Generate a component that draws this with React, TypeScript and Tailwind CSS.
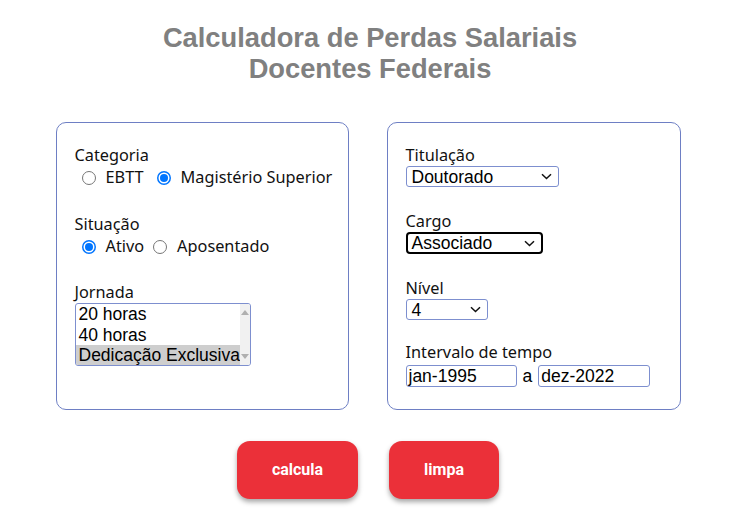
import React from 'react';

const labelFont = { fontFamily: '"Noto Sans", "Open Sans", sans-serif' };
const arial = { fontFamily: '"Liberation Sans", Arial, sans-serif' };

function Radio({ checked }: { checked?: boolean }) {
  return (
    <svg width="14" height="14" viewBox="0 0 14 14" className="shrink-0">
      {checked ? (
        <>
          <circle cx="7" cy="7" r="6.25" fill="white" stroke="#0075ff" strokeWidth="1.5" />
          <circle cx="7" cy="7" r="4" fill="#0075ff" />
        </>
      ) : (
        <circle cx="7" cy="7" r="6.5" fill="white" stroke="#767676" strokeWidth="1" />
      )}
    </svg>
  );
}

function Chevron() {
  return (
    <svg width="11" height="7" viewBox="0 0 11 7" className="shrink-0">
      <path d="M1 1.2 L5.5 5.5 L10 1.2" fill="none" stroke="#111" strokeWidth="1.5" />
    </svg>
  );
}

function FakeSelect({
  value,
  width,
  focused,
}: {
  value: string;
  width: string;
  focused?: boolean;
}) {
  return (
    <div
      className={`flex items-center justify-between bg-white pr-[6px] ${width} ${
        focused
          ? 'border-2 border-black rounded-[4px] h-[22px] pl-[4px]'
          : 'border border-[#7d8fcf] rounded-[3px] h-[21px] pl-[5px]'
      }`}
    >
      <span className="text-[17.5px] leading-[20px] text-black" style={arial}>
        {value}
      </span>
      <Chevron />
    </div>
  );
}

function Label({ children }: { children: React.ReactNode }) {
  return (
    <div className="text-[16.3px] leading-[22px] text-[#111]" style={labelFont}>
      {children}
    </div>
  );
}

function App() {
  return (
    <div className="w-[740px] h-[516px] bg-white overflow-hidden">
      <h1
        className="pt-[22px] text-center text-[27.3px] leading-[31px] font-bold text-[#808080]"
        style={arial}
      >
        Calculadora de Perdas Salariais
        <br />
        Docentes Federais
      </h1>

      <div className="flex justify-center gap-[38px] mt-[38px] pr-[4px]">
        <div className="w-[293px] h-[288px] border border-[#6e7fc4] rounded-[10px] pl-[18px] pt-[21px]">
          <Label>Categoria</Label>
          <div className="flex items-center h-[23px] pl-[7px] text-[16.3px] text-[#111]" style={labelFont}>
            <Radio />
            <span className="ml-[10px]">EBTT</span>
            <span className="ml-[13px]">
              <Radio checked />
            </span>
            <span className="ml-[10px]">Magistério Superior</span>
          </div>

          <div className="mt-[24px]">
            <Label>Situação</Label>
          </div>
          <div className="flex items-center h-[23px] pl-[7px] text-[16.3px] text-[#111]" style={labelFont}>
            <Radio checked />
            <span className="ml-[10px]">Ativo</span>
            <span className="ml-[9px]">
              <Radio />
            </span>
            <span className="ml-[10px]">Aposentado</span>
          </div>

          <div className="mt-[23px]">
            <Label>Jornada</Label>
          </div>
          <div className="flex w-[176px] h-[63px] border border-[#7d8fcf] rounded-[3px] overflow-hidden bg-white">
            <div className="flex-1 flex flex-col text-[17.5px] leading-[20.5px] text-black" style={arial}>
              <div className="pl-[3px]">20 horas</div>
              <div className="pl-[3px]">40 horas</div>
              <div className="pl-[3px] bg-[#cecece] whitespace-nowrap">Dedicação Exclusiva</div>
            </div>
            <div className="w-[17px] bg-[#f1f1f1] flex flex-col items-center justify-between py-[6px]">
              <svg width="8" height="5" viewBox="0 0 8 5">
                <path d="M0 5 L4 0 L8 5 Z" fill="#b0b0b0" />
              </svg>
              <svg width="8" height="5" viewBox="0 0 8 5">
                <path d="M0 0 L4 5 L8 0 Z" fill="#b0b0b0" />
              </svg>
            </div>
          </div>
        </div>

        <div className="w-[294px] h-[288px] border border-[#6e7fc4] rounded-[10px] pl-[18px] pt-[21px]">
          <Label>Titulação</Label>
          <FakeSelect value="Doutorado" width="w-[153px]" />

          <div className="mt-[23px]">
            <Label>Cargo</Label>
          </div>
          <FakeSelect value="Associado" width="w-[137px]" focused />

          <div className="mt-[23px]">
            <Label>Nível</Label>
          </div>
          <FakeSelect value="4" width="w-[82px]" />

          <div className="mt-[21px]">
            <Label>Intervalo de tempo</Label>
          </div>
          <div className="flex items-center">
            <div
              className="w-[111px] h-[22px] border border-[#7d8fcf] rounded-[3px] pl-[2px] text-[17.5px] leading-[20px] text-black"
              style={arial}
            >
              jan-1995
            </div>
            <span className="mx-[6px] text-[17.5px] text-black" style={arial}>
              a
            </span>
            <div
              className="w-[112px] h-[22px] border border-[#7d8fcf] rounded-[3px] pl-[2px] text-[17.5px] leading-[20px] text-black"
              style={arial}
            >
              dez-2022
            </div>
          </div>
        </div>
      </div>

      <div className="flex justify-center gap-[31px] mt-[31px] pr-[4px]">
        <button
          className="w-[121px] h-[58px] rounded-[13px] bg-[#eb3039] text-white font-bold text-[16px] shadow-[0_3px_5px_rgba(0,0,0,0.35)]"
          style={{ fontFamily: 'Roboto, sans-serif' }}
        >
          calcula
        </button>
        <button
          className="w-[110px] h-[58px] rounded-[13px] bg-[#eb3039] text-white font-bold text-[16px] shadow-[0_3px_5px_rgba(0,0,0,0.35)]"
          style={{ fontFamily: 'Roboto, sans-serif' }}
        >
          limpa
        </button>
      </div>
    </div>
  );
}

export default App;
